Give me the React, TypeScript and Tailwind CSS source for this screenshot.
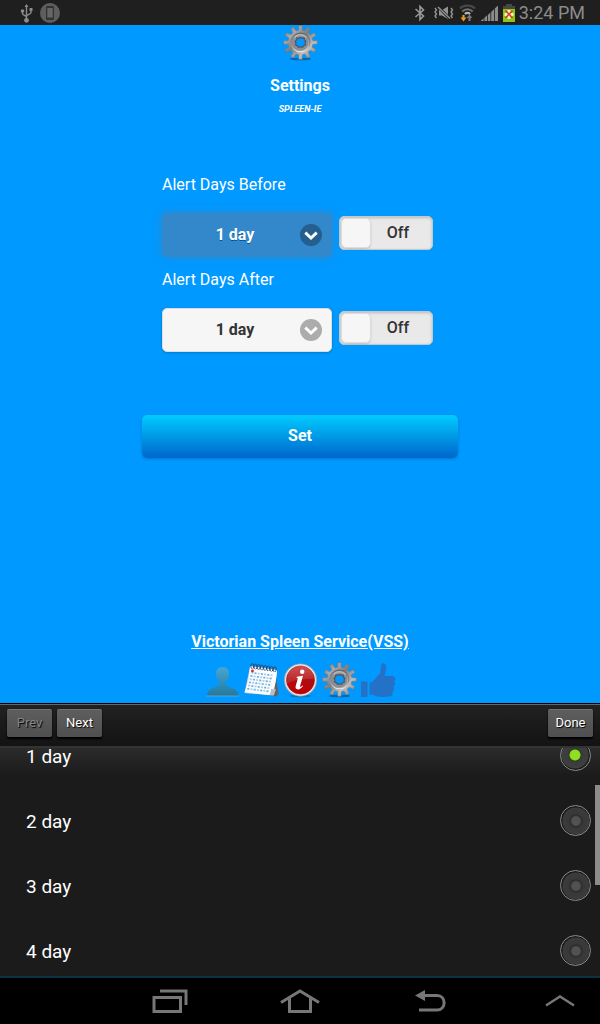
import { useId, useState } from "react";

const DAYS = ["1 day", "2 day", "3 day", "4 day"];

const TEETH = 12;
const gearOutline = Array.from({ length: TEETH }, (_, i) => {
  const at = (radius: number, offset: number) => {
    const angle = ((i + offset) / TEETH) * Math.PI * 2 - Math.PI / 2;
    return `${(18.5 + radius * Math.cos(angle)).toFixed(2)},${(17.5 + radius * Math.sin(angle)).toFixed(2)}`;
  };
  return [at(12.4, -0.3), at(14, -0.24), at(16.9, -0.2), at(16.9, 0.2), at(14, 0.24), at(12.4, 0.3)].join(" ");
}).join(" ");

function GearIcon() {
  const id = useId();
  return (
    <svg viewBox="0 0 36 36" className="size-9" aria-hidden="true">
      <defs>
        <linearGradient id={`${id}a`} x1="0" y1="0" x2="1" y2="1">
          <stop offset="0" stopColor="#6c7075" />
          <stop offset="0.25" stopColor="#a8aaad" />
          <stop offset="0.45" stopColor="#7a7d81" />
          <stop offset="0.7" stopColor="#bdbec0" />
          <stop offset="1" stopColor="#707276" />
        </linearGradient>
        <linearGradient id={`${id}b`} x1="0" y1="0" x2="0" y2="1">
          <stop offset="0" stopColor="#63666b" />
          <stop offset="0.6" stopColor="#8c8f93" />
          <stop offset="1" stopColor="#e8e8ea" />
        </linearGradient>
      </defs>
      <ellipse cx="18.5" cy="34" rx="11" ry="1.3" fill="#05508c" opacity="0.7" />
      <polygon points={gearOutline} fill={`url(#${id}a)`} stroke="#73777c" strokeWidth="0.6" strokeLinejoin="round" />
      <circle cx="18.5" cy="17.5" r="9.4" fill="none" stroke={`url(#${id}b)`} strokeWidth="1.3" />
      <circle cx="18.5" cy="17.5" r="8" fill="#8b8d91" />
      <path d="M12.500 12.500a7.800 7.800 0 0 1 12 0" fill="none" stroke="#b3b5b8" strokeWidth="1.500" />
      <path
        d="M18.500 12.500l1.600.8 2-.4.300 2 1.400 1.400-.8 1.800.5 1.900-1.900.7-1.100 1.600-2-.5-2 .5-1.100-1.600-1.900-.7.5-1.900-.8-1.800 1.400-1.400.3-2 2 .4z"
        fill="#0099ff"
        stroke="#50545a"
        strokeWidth="1.100"
      />
    </svg>
  );
}

function PersonIcon() {
  const id = useId();
  return (
    <svg viewBox="0 0 36 36" className="size-9" aria-hidden="true">
      <defs>
        <linearGradient id={id} x1="0" y1="0" x2="0" y2="1">
          <stop offset="0" stopColor="#48a6d3" />
          <stop offset="1" stopColor="#217a9f" />
        </linearGradient>
      </defs>
      <path
        d="M18.500 5C14 5 11.800 8.200 12 12c.1 4 1.700 6.500 3.500 8.300.6 2-.2 3.400-2.500 4.300-4 1.700-9 2.200-10 8.600V34h31.500v-.8c-1-6.400-6-6.900-10.500-8.600-2.300-.9-3.100-2.300-2.500-4.300C23.300 18.500 24.900 16 25 12c.2-3.800-2-7-6.500-7z"
        fill={`url(#${id})`}
      />
      <path d="M2.500 34h32.500" stroke="#6f9fba" strokeWidth="1" />
    </svg>
  );
}

function CalendarIcon() {
  const columns = [0, 1, 2, 3, 4, 5, 6];
  const rows = [0, 1, 2, 3, 4, 5];
  return (
    <svg viewBox="0 0 36 36" className="size-9" aria-hidden="true">
      <path d="M32 9l3.500 22-2 3.500L27 33z" fill="#5f6266" />
      <path d="M7 5l27 4-3.500 24.500L1.500 31z" fill="#d9dde2" />
      <path d="M7 4l27 4c-.6 9-1.500 15.500-4.500 20.500L26.500 33 1.500 30C5 23 6.300 14 7 4z" fill="#fbfcfd" />
      <path d="M26.500 33c1.200-2.500 1.700-4.200 1.500-6.200 1.800.8 3.400.8 5 .2L31 33z" fill="#b9bec5" />
      {rows.map((row) =>
        columns.map((column) => (
          <rect
            key={`${row}-${column}`}
            x={8.3 + column * 3.2 - row * 0.8}
            y={10 + row * 3.2 + column * 0.4}
            width="2"
            height="1.700"
            fill={(row + column) % 2 ? "#6bb0dc" : "#a5d0ea"}
          />
        )),
      )}
      <circle cx="9.500" cy="9" r="1.400" fill="#d8232a" />
      {[0, 1, 2, 3, 4, 5, 6, 7].map((ring) => (
        <path
          key={ring}
          d={`M${9 + ring * 3.2} ${6.8 + ring * 0.45}c-2.200-2-1-5.400.6-5s1.600 3 .4 4.700`}
          fill="none"
          stroke="#30415c"
          strokeWidth="1"
        />
      ))}
    </svg>
  );
}

function InfoIcon() {
  const id = useId();
  return (
    <svg viewBox="0 0 36 36" className="size-9" aria-hidden="true">
      <defs>
        <linearGradient id={id} x1="0" y1="0" x2="0" y2="1">
          <stop offset="0" stopColor="#c83a3d" />
          <stop offset="0.5" stopColor="#b00d10" />
          <stop offset="1" stopColor="#c00003" />
        </linearGradient>
      </defs>
      <ellipse cx="18.500" cy="34" rx="11" ry="1.500" fill="#0561a8" opacity="0.6" />
      <circle cx="18.500" cy="18" r="16.300" fill="#e2e3e4" stroke="#858a90" strokeWidth="0.6" />
      <circle cx="18.500" cy="18" r="14" fill={`url(#${id})`} stroke="#9c1012" strokeWidth="0.6" />
      <path d="M5 17.500a13.500 13.500 0 0 1 27-1c-7 .5-20 1-27 5z" fill="#fff" opacity="0.12" />
      <circle cx="20.200" cy="9.800" r="2.200" fill="#fff" />
      <path
        d="M14.800 14.700l6.200-1-2.900 10.300c-.3 1.300.5 1.300 2.300-.5l.6.6c-1.800 2.500-3.300 3.300-5 3.300-2.100 0-2.800-1.300-2.300-3.300l2-7.200c.2-.9 0-1.200-1.200-1.200z"
        fill="#fff"
      />
    </svg>
  );
}

function ThumbIcon() {
  return (
    <svg viewBox="0 0 36 36" className="size-9" fill="#2471c8" aria-hidden="true">
      <path d="M1 19.500h6.500V35H1zM9.500 21c3.500-1.200 6-4 8.200-7.200 2.300-2 3.100-4 3.100-7.400 0-3.200.9-5.400 2.500-5.400 2.800 0 3.300 3.800 2.700 6.800-.4 2.300-1 4.300-1.500 6.200h7.600c4 0 4.200 4.700 1.600 5.400 2 1.200 1.800 4.500-.4 5.100 1.500 1.300 1.200 4.300-.9 4.900 1 2-.1 4.800-2.700 5.200-4.300.6-10.300.6-13.300-.4-2-.8-3.900-1.600-6.900-1.700z" />
    </svg>
  );
}

function StatusBar() {
  return (
    <header className="flex h-[25px] shrink-0 items-center justify-between bg-[#1f1f1f] pr-[15px] pl-5 text-[#8c8c8c]">
      <div className="flex items-center gap-[6px]">
        <svg viewBox="0 0 14 20" className="h-5 w-[14px]" fill="none" stroke="currentColor" strokeWidth="1.400" aria-hidden="true">
          <path d="M6.500 17V3M2.500 7v3.500c0 1.800 4 2 4 4M11 6v3.500c0 1.800-4.500 1.800-4.500 4" />
          <circle cx="6.500" cy="17.300" r="2.400" fill="currentColor" stroke="none" />
          <circle cx="2.500" cy="8" r="1.800" fill="currentColor" stroke="none" />
          <path d="M6.500 1l2 3h-4zM9.500 5h3v3h-3z" fill="currentColor" stroke="none" />
        </svg>
        <svg viewBox="0 0 20 20" className="size-5" aria-hidden="true">
          <circle cx="10" cy="10" r="10" fill="#5e5e5e" />
          <rect x="6" y="3" width="8" height="14" rx="1" fill="#333" />
          <rect x="7.300" y="5" width="5.400" height="9.500" fill="#666" />
        </svg>
      </div>
      <div className="flex items-center gap-1">
        <svg viewBox="0 0 12 18" className="h-[18px] w-3" fill="none" stroke="#999" strokeWidth="1.600" aria-hidden="true">
          <path d="M1.500 5l8 7L6 15.500v-13L9.500 6l-8 7" />
        </svg>
        <svg viewBox="0 0 20 16" className="ml-1 h-4 w-5" fill="none" stroke="#929292" strokeWidth="1.400" aria-hidden="true">
          <path d="M1 3l1.500 2L1 7l1.500 2L1 11l1.500 2M17 3l1.500 2L17 7l1.500 2L17 11l1.500 2" />
          <path d="M5 5h3l6-3.500V14L8 10.500H5z" fill="#929292" stroke="none" />
          <path d="M4 1.500L16 14" stroke="#1f1f1f" strokeWidth="2.600" />
          <path d="M4 2l12 11.500" />
        </svg>
        <svg viewBox="0 0 17 18" className="ml-px h-[18px] w-[17px]" fill="none" strokeWidth="2.200" aria-hidden="true">
          <path d="M1 4.500c4-4 11-4 15 0" stroke="#484848" />
          <path d="M3.300 7.500c3-3 7.400-3 10.400 0" stroke="#707070" />
          <path d="M5.800 10c1.800-1.500 3.600-1.500 5.400 0" stroke="#b5b5b5" />
          <path d="M4.500 11v3" stroke="#e99a26" />
          <path d="M1.500 13.500h6l-3 4z" fill="#e99a26" />
          <path d="M10.500 17v-3" stroke="#777" />
          <path d="M7.500 14l3-3.500 3 3.500z" fill="#777" />
        </svg>
        <svg viewBox="0 0 18 18" className="ml-px h-[18px] w-[18px]" fill="#8b8b8b" aria-hidden="true">
          <path d="M0 17h2.600v-2.500L0 16.500zM3.400 17H6v-5.500L3.400 13.800zM6.800 17h2.600V8.500L6.800 11zM10.200 17h2.800V5.300L10.200 8zM13.800 17h3.200V1.500l-3.200 3z" />
        </svg>
        <svg viewBox="0 0 12 18" className="h-[18px] w-3" aria-hidden="true">
          <path d="M3 0h6v2h3v4H0V2h3z" fill="#474747" />
          <path d="M0 5h12v13H0z" fill="#8cc610" />
          <path d="M4.500 6h3v3h3v3h-3v3h-3v-3h-3V9h3z" fill="#fff" opacity="0.8" />
          <path d="M2.500 6.500l7 7.500M9.500 6.500l-7 7.500" stroke="#e43a24" strokeWidth="1.500" />
        </svg>
        <time className="text-lg leading-6 text-[#8c8c8c]">3:24 PM</time>
      </div>
    </header>
  );
}

interface AlertFieldProps {
  id: string;
  label: string;
  focused?: boolean;
  value: string;
  onChange: (value: string) => void;
}

function AlertField({ id, label, focused = false, value, onChange }: AlertFieldProps) {
  const [on, setOn] = useState(false);
  return (
    <div>
      <label htmlFor={id} className="block text-base leading-6 text-white">
        {label}
      </label>
      <div className="mt-4 flex items-center gap-[7px]">
        <div className="relative w-[170px]">
          <select
            id={id}
            value={value}
            onChange={(event) => onChange(event.target.value)}
            className={
              focused
                ? "block h-11 w-full appearance-none rounded-[5px] bg-[#3388cc] pr-6 text-center text-base font-bold text-white shadow-[0_0_8px_#3388cc] outline-none [text-align-last:center] [text-shadow:0_1px_0_#005599]"
                : "block h-11 w-full appearance-none rounded-[5px] border border-[#dddddd] bg-[#f6f6f6] pr-6 text-center text-base font-bold text-[#333333] shadow-[0_1px_3px_rgba(0,0,0,0.2)] outline-none [text-align-last:center] [text-shadow:0_1px_0_#f3f3f3]"
            }
          >
            {DAYS.map((day) => (
              <option key={day}>{day}</option>
            ))}
          </select>
          <svg viewBox="0 0 22 22" className="pointer-events-none absolute top-[11px] right-[10px] size-[22px]" aria-hidden="true">
            <circle cx="11" cy="11" r="11" fill={focused ? "#245f8f" : "#acacac"} />
            <path d="M5.300 8.700l5.700 5.300 5.700-5.300" fill="none" stroke="#fff" strokeWidth="3" />
          </svg>
        </div>
        <button
          type="button"
          role="switch"
          aria-checked={on}
          aria-label={`${label} alert`}
          onClick={() => setOn(!on)}
          className={
            on
              ? "mb-1 flex h-[34px] w-[94px] flex-row-reverse items-center rounded-[5px] border border-[#c8c8c8] bg-[#3388cc] p-px text-white"
              : "mb-1 flex h-[34px] w-[94px] items-center rounded-[5px] border border-[#c8c8c8] bg-[#e9e9e9] p-px text-[#333333] shadow-[inset_0_1px_3px_rgba(0,0,0,0.2)]"
          }
        >
          <span className="h-[30px] w-[30px] rounded-[5px] border border-[#dddddd] bg-[#f6f6f6] shadow-[0_1px_2px_rgba(0,0,0,0.15)]" />
          <span className="flex-1 pr-[6px] text-center text-base leading-6 font-medium">{on ? "On" : "Off"}</span>
        </button>
      </div>
    </div>
  );
}

const pickerButton =
  "h-7 w-[45px] rounded-[2px] border-t border-[#737373] bg-linear-to-b from-[#5e5e5e] to-[#4f4f4f] text-[13px] leading-5 text-white shadow-[0_2px_2px_#000] [text-shadow:1px_1px_1px_#000] disabled:text-[#858585]";

export default function App() {
  const [before, setBefore] = useState(DAYS[0]);
  const [after, setAfter] = useState(DAYS[0]);

  return (
    <div className="flex h-screen flex-col overflow-hidden bg-[#1a1a1a] font-[Roboto,sans-serif]">
      <StatusBar />

      <main className="flex shrink-0 flex-col items-center bg-[#0099ff] pb-[5px] text-white">
        <GearIcon />
        <h1 className="mt-[13px] text-base leading-6 font-bold">Settings</h1>
        <p className="mt-[3px] text-[9px] leading-4 font-bold italic">SPLEEN-IE</p>

        <form className="mt-14 w-full max-w-[316px]" onSubmit={(event) => event.preventDefault()}>
          <div className="flex flex-col gap-[11px] pl-5">
            <AlertField id="days-before" label="Alert Days Before" focused value={before} onChange={setBefore} />
            <AlertField id="days-after" label="Alert Days After" value={after} onChange={setAfter} />
          </div>
          <button
            type="submit"
            className="mt-[63px] h-[43px] w-full rounded-[5px] bg-linear-to-b from-[#00ccff] to-[#0066cc] pb-[2px] text-base font-bold text-white shadow-[0_1px_3px_rgba(0,0,0,0.2)]"
          >
            Set
          </button>
        </form>

        <a href="#vss" className="mt-[172px] text-base leading-6 font-bold underline">
          Victorian Spleen Service(VSS)
        </a>
        <nav className="mt-2 flex gap-[3px]" aria-label="Sections">
          <a href="#profile" aria-label="Profile"><PersonIcon /></a>
          <a href="#calendar" aria-label="Calendar"><CalendarIcon /></a>
          <a href="#info" aria-label="Information"><InfoIcon /></a>
          <a href="#settings" aria-label="Settings"><GearIcon /></a>
          <a href="#like" aria-label="Like"><ThumbIcon /></a>
        </nav>
      </main>

      <div className="flex h-[43px] shrink-0 items-center gap-[5px] border-t border-black bg-linear-to-b from-[#222222] to-[#131313] px-[7px] pb-[5px] shadow-[inset_0_1px_0_#666]">
        <button type="button" disabled className={pickerButton}>Prev</button>
        <button type="button" className={pickerButton}>Next</button>
        <button type="button" className={`ml-auto ${pickerButton}`}>Done</button>
      </div>

      <section className="relative min-h-0 flex-1 overflow-hidden border-t-2 border-[#333333] bg-[linear-gradient(#2b2b2b,#1b1b1b_28px)]" aria-label="Days">
        <div className="-mt-[25px]">
          {DAYS.map((day) => (
            <label key={day} className="flex h-[65px] items-center justify-between pr-[9px] pl-[26px] text-white">
              <span className="pt-[3px] text-[19px] leading-6">{day}</span>
              <input
                type="radio"
                name="day"
                checked={before === day}
                onChange={() => setBefore(day)}
                className="size-[31px] appearance-none rounded-full border border-[#8a8a8a] bg-[radial-gradient(circle_at_15px_15px,#525252_4px,#292929_6px,#383838_7px,#3b3b3b_13px,#1b1b1b_14px)] checked:bg-[radial-gradient(circle_at_14px_14px,#8fe022_4px,#86d820_5px,#2a3a1a_6px,#3b3b3b_7px,#3f3f3f_13px,#1b1b1b_14px)]"
              />
            </label>
          ))}
        </div>
        <div className="absolute top-[37px] right-0 h-[100px] w-[5px] bg-[#8c8c8c]" />
      </section>

      <nav className="grid h-12 shrink-0 grid-cols-[1fr_390px_1fr] border-t-2 border-[#0a3445] bg-black text-[#777777]" aria-label="System">
        <div className="col-start-2 grid grid-cols-3">
          <button type="button" aria-label="Recent apps" className="grid place-items-center">
            <svg viewBox="0 0 36 24" className="h-6 w-9" fill="none" stroke="currentColor" strokeWidth="3">
              <path d="M2 8.500h26.500v14H2zM8 2h26v14" />
            </svg>
          </button>
          <button type="button" aria-label="Home" className="grid place-items-center">
            <svg viewBox="0 0 40 24" className="h-6 w-10" fill="none" stroke="currentColor" strokeWidth="3">
              <path d="M1 13.500L20 2l19 11.500M9.500 9.500v13h21v-13" />
            </svg>
          </button>
          <button type="button" aria-label="Back" className="grid place-items-center">
            <svg viewBox="0 0 32 24" className="h-6 w-8" fill="none" stroke="currentColor" strokeWidth="3">
              <path d="M9 6.500h14c9.500 0 9.500 14.500 0 14.500H5" />
              <path d="M1 6.500L11 1v11z" fill="currentColor" stroke="none" />
            </svg>
          </button>
        </div>
        <button type="button" aria-label="Expand" className="grid w-20 place-items-center justify-self-end">
          <svg viewBox="0 0 30 24" className="h-6 w-[30px]" fill="none" stroke="currentColor" strokeWidth="2.400">
            <path d="M1 16.500L15 7.500l14 9" />
          </svg>
        </button>
      </nav>
    </div>
  );
}
